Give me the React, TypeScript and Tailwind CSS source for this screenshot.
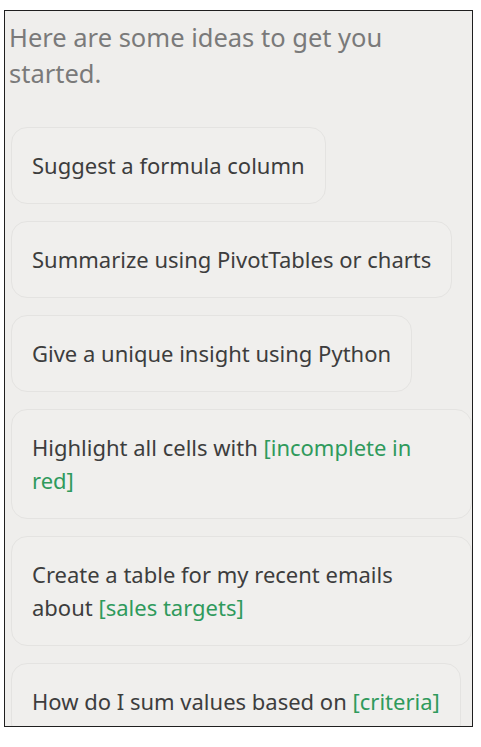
import React from "react";

type Part = { t: string; g?: boolean };

const cards: Part[][] = [
  [{ t: "Suggest a formula column" }],
  [{ t: "Summarize using PivotTables or charts" }],
  [{ t: "Give a unique insight using Python" }],
  [{ t: "Highlight all cells with " }, { t: "[incomplete in red]", g: true }],
  [{ t: "Create a table for my recent emails about " }, { t: "[sales targets]", g: true }],
  [{ t: "How do I sum values based on " }, { t: "[criteria]", g: true }],
];

export default function App() {
  return (
    <div className="w-[481px] h-[747px] bg-white pt-[10px] pl-[4px]" style={{ fontFamily: '"Noto Sans", "Open Sans", sans-serif' }}>
      <div className="w-[469px] h-[717px] border border-[#1f1f1f] bg-[#efeeec] overflow-hidden">
        <p className="pl-[4px] pt-[8px] max-w-[440px] text-[25.5px] leading-[36px] text-[#7a7a7a]">
          Here are some ideas to get you started.
        </p>
        <div className="flex flex-col items-start gap-[17px] pl-[6px] mt-[36px]">
          {cards.map((c, i) => (
            <div
              key={i}
              className="max-w-full rounded-[16px] border border-[#e4e3e1] bg-[#f0efed] px-[20px] py-[21px] text-[22px] leading-[33px] text-[#3d3d3d]"
            >
              {c.map((p, j) => (
                <span key={j} className={p.g ? "text-[#2f9a5c]" : undefined}>
                  {p.t}
                </span>
              ))}
            </div>
          ))}
        </div>
      </div>
    </div>
  );
}
